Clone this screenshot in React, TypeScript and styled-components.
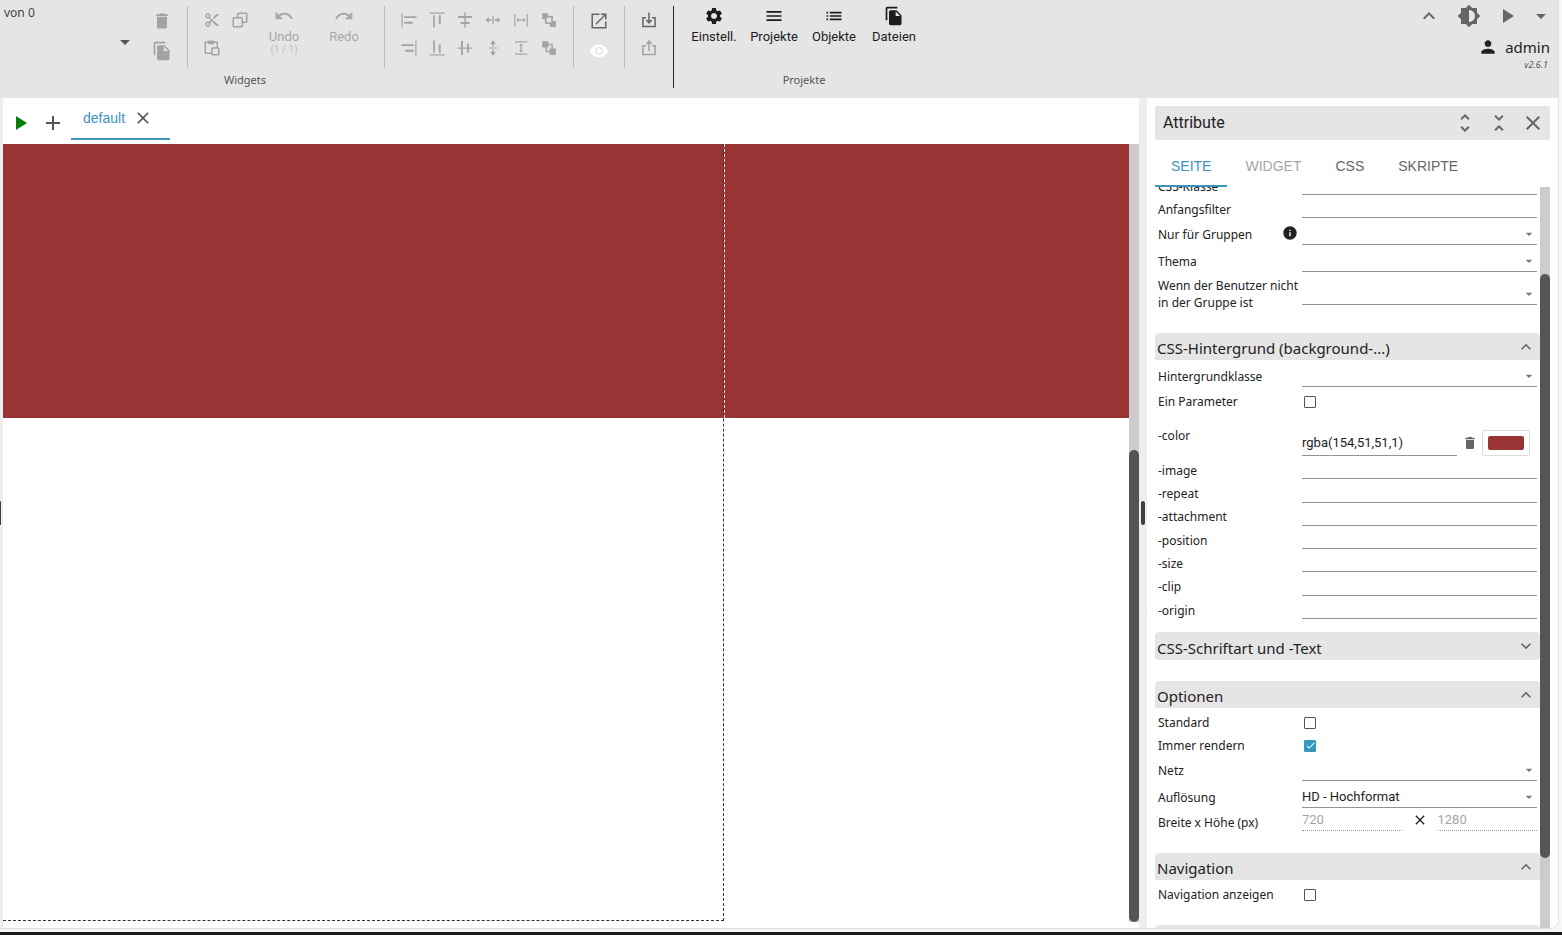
import React, { useState } from 'react';
import styled, { createGlobalStyle, css } from 'styled-components';
import {
  MdAdd,
  MdArrowDropDown,
  MdBrightness6,
  MdCheck,
  MdClose,
  MdDelete,
  MdFileCopy,
  MdInfo,
  MdKeyboardArrowDown,
  MdKeyboardArrowUp,
  MdList,
  MdMenu,
  MdPerson,
  MdPlayArrow,
  MdRedo,
  MdSettings,
  MdUndo,
  MdUnfoldLess,
  MdUnfoldMore,
  MdVisibility,
} from 'react-icons/md';
import { BiCopy, BiCut, BiPaste } from 'react-icons/bi';

const ui = '"Noto Sans", "Open Sans", sans-serif';
const roboto = 'Roboto, "Liberation Sans", sans-serif';
const arial = '"Liberation Sans", Arial, sans-serif';

const GlobalStyle = createGlobalStyle`
  *, *::before, *::after { box-sizing: border-box; }
  body { margin: 0; background: #f7f7f7; color: #222; font-family: ${ui}; }
  button, input, select { font: inherit; color: inherit; margin: 0; padding: 0; border: 0; border-radius: 0; background: none; outline: none; }
  button { cursor: pointer; }
  svg { display: block; flex: none; }
`;

const Screen = styled.div`
  display: flex;
  flex-direction: column;
  height: 100vh;
  border-bottom: 3px solid #1b1a1b;
  padding: 0 4px 4px 0;
`;

const Window = styled.div`
  flex: 1;
  min-height: 0;
  display: flex;
  flex-direction: column;
  overflow: hidden;
  background: #fff;
  box-shadow: 0 0 1px 1px #e0e0e0;
  border-bottom-right-radius: 8px;
`;

/* ---------- toolbar ---------- */

const Toolbar = styled.header`
  display: flex;
  height: 98px;
  padding-top: 6px;
  background: #e5e5e5;
`;

const Group = styled.section`
  display: flex;
  flex-direction: column;
  height: 82px;
`;

const Tools = styled.div`
  display: flex;
  height: 63px;
`;

const GroupLabel = styled.div<{ $indent?: number }>`
  margin-top: 4px;
  padding-left: ${(p) => p.$indent ?? 0}px;
  font-size: 11px;
  line-height: 16px;
  color: #555;
  text-align: ${(p) => (p.$indent ? 'left' : 'center')};
`;

const Divider = styled.div`
  width: 1px;
  margin: 0 10px;
  background: #bdbdbd;
`;

const StrongDivider = styled.div`
  width: 1px;
  height: 82px;
  margin: 0 10px;
  background: #222;
`;

const ViewPicker = styled.div`
  display: flex;
  flex-direction: column;
  width: 147px;
  padding: 0 10px 0 4px;
  font-size: 12px;
  line-height: 14px;
  color: #444;
`;

const PickerArrow = styled.button`
  align-self: flex-end;
  margin-top: 10px;
  color: #555;
`;

const IconGrid = styled.div<{ $cell: number }>`
  display: grid;
  grid-auto-flow: column;
  align-content: start;
  grid-template-rows: repeat(2, ${(p) => p.$cell}px);
  grid-auto-columns: ${(p) => p.$cell}px;
`;

const IconButton = styled.button<{ $tone?: string }>`
  display: grid;
  place-items: center;
  color: ${(p) => p.$tone ?? '#a3a3a3'};
`;

const ToolButton = styled.button<{ $muted?: boolean }>`
  display: flex;
  flex-direction: column;
  align-items: center;
  width: 60px;
  font-family: ${roboto};
  font-size: 13px;
  line-height: 22px;
  color: ${(p) => (p.$muted ? '#a8a8a8' : '#1c1c1c')};

  small {
    font-size: 10px;
    line-height: 4px;
    color: #c2c2c2;
  }
`;

const Account = styled.div`
  display: flex;
  flex-direction: column;
  align-items: flex-end;
  margin-left: auto;
  padding-right: 8px;
`;

const AccountTools = styled.div`
  display: flex;
  align-items: center;
  height: 20px;
  gap: 14px;
  margin-right: -3px;

  > :first-child { margin-right: 2px; }
  > :last-child { margin-left: -4px; }
`;

const User = styled.div`
  display: flex;
  align-items: center;
  gap: 7px;
  margin-top: 10px;
  font-size: 15px;
  line-height: 22px;
`;

const Version = styled.em`
  padding-right: 2px;
  font-size: 9px;
  line-height: 14px;
  color: #555;
`;

/* ---------- work area ---------- */

const Work = styled.div`
  flex: 1;
  min-height: 0;
  display: flex;
`;

const Splitter = styled.div<{ $size: number }>`
  display: flex;
  align-items: center;
  justify-content: ${(p) => (p.$size > 4 ? 'center' : 'flex-start')};
  width: ${(p) => p.$size}px;
  background: #eee;

  &::after {
    content: '';
    width: ${(p) => (p.$size > 4 ? 4 : 1)}px;
    height: 24px;
    border-radius: 2px;
    background: #3f3d45;
  }
`;

const Editor = styled.main`
  flex: 1;
  min-width: 0;
  display: flex;
  flex-direction: column;
  padding-bottom: 6px;
`;

const ViewTabs = styled.div`
  display: flex;
  align-items: center;
  height: 46px;
  padding-top: 4px;
  padding-left: 5px;
  gap: 9px;
`;

const ViewTab = styled.div`
  display: flex;
  align-items: center;
  align-self: flex-start;
  gap: 8px;
  height: 38px;
  margin-left: -3px;
  padding: 0 17px 4px 12px;
  border-bottom: 2px solid #3e93bd;
  font-family: ${arial};
  font-size: 14px;
  color: #3e93bd;
`;

const Stage = styled.div`
  flex: 1;
  min-height: 0;
  display: flex;
`;

const Canvas = styled.div`
  position: relative;
  flex: 1;
  min-width: 0;
  overflow: hidden;
`;

const CanvasFill = styled.div`
  height: 274px;
  background: #9a3333;
`;

const ResolutionFrame = styled.div`
  position: absolute;
  top: 0;
  bottom: 1px;
  left: 0;
  width: 721px;
  border: dashed #333;
  border-width: 0 1px 1px 0;
`;

const FrameHalo = styled.div`
  position: absolute;
  top: 0;
  left: 721px;
  height: 274px;
  border-left: 1px dashed #f4e6e6;
`;

const ScrollTrack = styled.div<{ $before: number; $after: number }>`
  display: flex;
  width: 10px;
  padding: ${(p) => p.$before}px 0 ${(p) => p.$after}px;
  background: #ccc;

  &::after {
    content: '';
    flex: 1;
    border-radius: 5px;
    background: #555;
  }
`;

/* ---------- attribute panel ---------- */

const Panel = styled.aside`
  display: flex;
  flex-direction: column;
  width: 411px;
  padding: 8px 8px 0;
`;

const PanelHeader = styled.div`
  display: flex;
  align-items: center;
  height: 34px;
  padding: 0 5px 0 8px;
  gap: 10px;
  border-radius: 2px;
  background: #e5e5e5;
  font-family: ${roboto};
  font-size: 16px;

  > span { flex: 1; padding-bottom: 2px; }
`;

const PanelTabs = styled.div`
  display: flex;
  height: 47px;
  gap: 2px;
  font-family: ${arial};
  font-size: 14px;
`;

const PanelTab = styled.button<{ $state?: 'active' | 'disabled' }>`
  padding: 7px 16px 0;
  border-bottom: 2px solid transparent;
  color: #666;
  ${(p) => p.$state === 'active' && css`border-color: #3e93bd; color: #3e93bd;`}
  ${(p) => p.$state === 'disabled' && css`color: #a5a5a5;`}
`;

const PanelBody = styled.div`
  flex: 1;
  min-height: 0;
  display: flex;
  overflow: hidden;
`;

const Sections = styled.div`
  flex: 1;
  min-width: 0;
  margin-top: -15px;
`;

const SectionHeader = styled.button<{ $open: boolean }>`
  display: flex;
  align-items: center;
  justify-content: space-between;
  width: 100%;
  height: ${(p) => (p.$open ? 27 : 28)}px;
  padding: 0 4px 0 2px;
  border-radius: ${(p) => (p.$open ? '4px 4px 0 0' : '4px')};
  background: #e5e5e5;
  font-size: 15px;
  line-height: 24px;

  > span { padding-top: 3px; }
  > svg { color: #666; }
`;

const SectionBody = styled.div<{ $gap?: number }>`
  padding: 0 3px ${(p) => p.$gap ?? 22}px;
`;

const rowHeight = { text: 23, check: 23, select: 27, double: 39, color: 46 };
type RowKind = keyof typeof rowHeight;

const RowBox = styled.div<{ $kind: RowKind }>`
  display: grid;
  grid-template-columns: 144px minmax(0, 1fr);
  align-items: center;
  height: ${(p) => rowHeight[p.$kind]}px;
`;

const StyleRows = styled.div`
  display: grid;
  grid-template-rows: repeat(7, 1fr);
  height: 163px;
  align-items: end;
`;

const RowLabel = styled.label`
  display: flex;
  align-items: center;
  justify-content: space-between;
  padding-top: 5px;
  font-size: 12px;
  line-height: 17px;
  white-space: pre;

  > svg { margin: -2px 4px 0 0; }
`;

const TextInput = styled.input<{ $dotted?: boolean }>`
  width: 100%;
  height: 23px;
  border-bottom: 1px ${(p) => (p.$dotted ? 'dotted #999' : 'solid #949494')};
  font-family: ${roboto};
  font-size: 13px;
  line-height: 20px;
  &:disabled { color: #a5a5a5; }
`;

const SelectBox = styled.div`
  display: grid;
  align-items: center;
  justify-items: end;

  > * { grid-area: 1 / 1; }
  > svg { margin-top: 4px; color: #777; pointer-events: none; }
`;

const SelectInput = styled.select`
  appearance: none;
  width: 100%;
  height: 27px;
  padding-top: 4px;
  border-bottom: 1px solid #949494;
  font-family: ${roboto};
  font-size: 13px;
`;

const CheckBox = styled.span`
  display: grid;
  place-items: center;
  width: 12px;
  height: 12px;
  margin: 6px 0 0 2px;

  > * { grid-area: 1 / 1; }
  > svg { color: #fff; pointer-events: none; }
`;

const CheckInput = styled.input`
  appearance: none;
  width: 12px;
  height: 12px;
  border: 1px solid #555;
  border-radius: 1px;
  &:checked { border-color: #3399c0; background: #3399c0; }
`;

const ColorField = styled.div`
  display: flex;
  align-items: flex-end;
  height: 46px;
  padding-right: 7px;

  > input { flex: 1; min-width: 0; height: 26px; }
  > button:first-of-type { margin: 0 4px 5px 5px; color: #666; }
`;

const Swatch = styled.button`
  width: 48px;
  height: 26px;
  padding: 5px;
  border: 1px solid #ddd;
  border-radius: 2px;

  &::after {
    content: '';
    display: block;
    height: 14px;
    border-radius: 2px;
    background: #9a3333;
  }
`;

const SizeField = styled.div`
  display: grid;
  grid-template-columns: minmax(0, 1fr) 16px minmax(0, 1fr);
  align-items: center;
  gap: 10px;
`;

/* ---------- alignment glyphs ---------- */

const Glyph = ({ children, turn }: { children: React.ReactNode; turn?: string }) => (
  <svg width="16" height="16" viewBox="0 0 16 16" fill="currentColor" aria-hidden="true">
    <g transform={turn}>{children}</g>
  </svg>
);

const alignEdge = (
  <>
    <path d="M.5 .8h1.2v14.8H.5z" />
    <path d="M3.2 4.2h12.4v1.7H3.2zM3.2 9.8h8.6v1.9H3.2z" />
  </>
);
const alignMiddle = <path d="M7.4 .4h1.4v3.6h6.200v1.900H8.800v4.100h3.800v1.900H8.800v3.700H7.400v-3.700H3.600V10h3.800V5.900H1V4h6.400z" />;
const spread = <path d="M7.4 4h1.2v8.4H7.4zM.6 8l3.200-3v2.200h2.600v1.600H3.800V11zM15.400 8l-3.200-3v2.200H9.600v1.600h2.600V11z" />;
const fitBetween = <path d="M1.2 2h1.2v12.400H1.2zM13.600 2h1.200v12.400h-1.200zM3.4 8l2.4-2.2v1.6h4.4V5.8L12.6 8l-2.4 2.2V8.6H5.8v1.6z" />;
const toFront = (
  <>
    <path d="M1.200 1.200h6v6h-6zM8.900 8.900h6v6h-6z" />
    <path d="M3.900 3.900h8v8h-8z" />
    <path d="M5.600 5.600h4.600v4.600H5.600z" fill="#e5e5e5" />
  </>
);
const toBack = (
  <>
    <path d="M4.600 3.800h7.200v8.400H4.600z" />
    <path d="M6 5.200h4.400v5.600H6z" fill="#e5e5e5" />
    <path d="M1.200 1.200h6.200v6.200H1.200zM8.600 8.600h6.200v6.200H8.600z" />
  </>
);

const alignTools: [string, React.ReactNode][] = [
  ['Links ausrichten', <Glyph>{alignEdge}</Glyph>],
  ['Rechts ausrichten', <Glyph turn="matrix(-1 0 0 1 16 0)">{alignEdge}</Glyph>],
  ['Oben ausrichten', <Glyph turn="matrix(0 1 1 0 0 0)">{alignEdge}</Glyph>],
  ['Unten ausrichten', <Glyph turn="matrix(0 -1 1 0 0 16)">{alignEdge}</Glyph>],
  ['Horizontal zentrieren', <Glyph>{alignMiddle}</Glyph>],
  ['Vertikal zentrieren', <Glyph turn="matrix(0 1 1 0 0 0)">{alignMiddle}</Glyph>],
  ['Horizontal verteilen', <Glyph>{spread}</Glyph>],
  ['Vertikal verteilen', <Glyph turn="matrix(0 1 1 0 0 0)">{spread}</Glyph>],
  ['Gleiche Breite', <Glyph>{fitBetween}</Glyph>],
  ['Gleiche Höhe', <Glyph turn="matrix(0 1 1 0 0 0)">{fitBetween}</Glyph>],
  ['Nach vorne', <Glyph>{toFront}</Glyph>],
  ['Nach hinten', <Glyph>{toBack}</Glyph>],
];

const outline = { fill: 'none', stroke: 'currentColor', strokeWidth: 1.5 };

const OpenIcon = () => (
  <svg width="16" height="16" viewBox="0 0 16 16" {...outline} aria-hidden="true">
    <path d="M8.500 1.300H1.200v13.500h13.600V8.500M10 1.300h4.800V6.500M14.600 1.500L5 11" />
  </svg>
);
const ImportIcon = () => (
  <svg width="16" height="16" viewBox="0 0 16 16" {...outline} aria-hidden="true">
    <path d="M5 5.700H1.900v8.700h12.200V5.700H11M8 .6v10M5.300 8L8 10.800 10.700 8" />
  </svg>
);
const ExportIcon = () => (
  <svg width="16" height="16" viewBox="0 0 16 16" {...outline} aria-hidden="true">
    <path d="M5 5.700H1.900v8.700h12.200V5.700H11M8 11V1.200M5.300 4L8 1.200 10.700 4" />
  </svg>
);

/* ---------- rows ---------- */

type RowProps = { id: string; label: string; kind?: RowKind; info?: boolean; children: React.ReactNode };

const Row = ({ id, label, kind = 'text', info, children }: RowProps) => (
  <RowBox $kind={kind}>
    <RowLabel htmlFor={id}>
      {label}
      {info && <MdInfo size={16} />}
    </RowLabel>
    {children}
  </RowBox>
);

const TextRow = ({ id, label }: { id: string; label: string }) => (
  <Row id={id} label={label}>
    <TextInput id={id} />
  </Row>
);

const SelectRow = ({ id, label, kind = 'select', info, value = '' }: { id: string; label: string; kind?: RowKind; info?: boolean; value?: string }) => (
  <Row id={id} label={label} kind={kind} info={info}>
    <SelectBox>
      <SelectInput id={id} defaultValue={value}>
        <option>{value}</option>
      </SelectInput>
      <MdArrowDropDown size={16} />
    </SelectBox>
  </Row>
);

const CheckRow = ({ id, label, on = false }: { id: string; label: string; on?: boolean }) => {
  const [checked, setChecked] = useState(on);
  return (
    <Row id={id} label={label} kind="check">
      <CheckBox>
        <CheckInput id={id} type="checkbox" checked={checked} onChange={(e) => setChecked(e.target.checked)} />
        {checked && <MdCheck size={11} />}
      </CheckBox>
    </Row>
  );
};

type SectionProps = { title: string; start?: boolean; gap?: number; children?: React.ReactNode };

const Section = ({ title, start = true, gap, children }: SectionProps) => {
  const [open, setOpen] = useState(start);
  return (
    <>
      <SectionHeader $open={open} onClick={() => setOpen(!open)} aria-expanded={open}>
        <span>{title}</span>
        {open ? <MdKeyboardArrowUp size={20} /> : <MdKeyboardArrowDown size={20} />}
      </SectionHeader>
      <SectionBody $gap={gap}>{open && children}</SectionBody>
    </>
  );
};

const styleProps = ['image', 'repeat', 'attachment', 'position', 'size', 'clip', 'origin'];

export default function App() {
  return (
    <>
      <GlobalStyle />
      <Screen>
        <Window>
          <Toolbar>
            <Group>
              <Tools>
                <ViewPicker>
                  von 0
                  <PickerArrow aria-label="Auswahl"><MdArrowDropDown size={24} /></PickerArrow>
                </ViewPicker>
                <IconGrid $cell={30}>
                  <IconButton aria-label="Löschen"><MdDelete size={20} /></IconButton>
                  <IconButton aria-label="Duplizieren"><MdFileCopy size={20} /></IconButton>
                </IconGrid>
                <Divider />
                <IconGrid $cell={28}>
                  <IconButton aria-label="Ausschneiden"><BiCut size={18} /></IconButton>
                  <IconButton aria-label="Einfügen"><BiPaste size={18} /></IconButton>
                  <IconButton aria-label="Kopieren"><BiCopy size={18} /></IconButton>
                </IconGrid>
                <ToolButton $muted><MdUndo size={20} />Undo<small>(1 / 1)</small></ToolButton>
                <ToolButton $muted><MdRedo size={20} />Redo</ToolButton>
                <Divider />
                <IconGrid $cell={28}>
                  {alignTools.map(([name, icon]) => (
                    <IconButton key={name} aria-label={name}>{icon}</IconButton>
                  ))}
                </IconGrid>
                <Divider />
                <IconGrid $cell={30}>
                  <IconButton aria-label="Fenster öffnen" $tone="#666"><OpenIcon /></IconButton>
                  <IconButton aria-label="Sichtbarkeit" $tone="#fff"><MdVisibility size={20} /></IconButton>
                </IconGrid>
                <Divider />
                <IconGrid $cell={28}>
                  <IconButton aria-label="Importieren" $tone="#666"><ImportIcon /></IconButton>
                  <IconButton aria-label="Exportieren"><ExportIcon /></IconButton>
                </IconGrid>
              </Tools>
              <GroupLabel $indent={224}>Widgets</GroupLabel>
            </Group>
            <StrongDivider />
            <Group>
              <Tools>
                <ToolButton><MdSettings size={20} />Einstell.</ToolButton>
                <ToolButton><MdMenu size={20} />Projekte</ToolButton>
                <ToolButton><MdList size={20} />Objekte</ToolButton>
                <ToolButton><MdFileCopy size={20} />Dateien</ToolButton>
              </Tools>
              <GroupLabel>Projekte</GroupLabel>
            </Group>
            <Account>
              <AccountTools>
                <IconButton aria-label="Einklappen" $tone="#666"><MdKeyboardArrowUp size={24} /></IconButton>
                <IconButton aria-label="Helligkeit" $tone="#666"><MdBrightness6 size={24} /></IconButton>
                <IconButton aria-label="Starten" $tone="#666"><MdPlayArrow size={24} /></IconButton>
                <IconButton aria-label="Mehr" $tone="#666"><MdArrowDropDown size={24} /></IconButton>
              </AccountTools>
              <User><MdPerson size={20} />admin</User>
              <Version>v2.6.1</Version>
            </Account>
          </Toolbar>

          <Work>
            <Splitter $size={3} />
            <Editor>
              <ViewTabs>
                <IconButton aria-label="Ansicht starten" $tone="#0a7d0a"><MdPlayArrow size={24} /></IconButton>
                <IconButton aria-label="Neue Ansicht" $tone="#555"><MdAdd size={24} /></IconButton>
                <ViewTab>
                  default
                  <IconButton aria-label="Schließen" $tone="#555"><MdClose size={20} /></IconButton>
                </ViewTab>
              </ViewTabs>
              <Stage>
                <Canvas>
                  <CanvasFill />
                  <FrameHalo />
                  <ResolutionFrame />
                </Canvas>
                <ScrollTrack $before={306} $after={0} />
              </Stage>
            </Editor>
            <Splitter $size={8} />
            <Panel>
              <PanelHeader>
                <span>Attribute</span>
                <IconButton aria-label="Alle ausklappen" $tone="#666"><MdUnfoldMore size={24} /></IconButton>
                <IconButton aria-label="Alle einklappen" $tone="#666"><MdUnfoldLess size={24} /></IconButton>
                <IconButton aria-label="Schließen" $tone="#666"><MdClose size={24} /></IconButton>
              </PanelHeader>
              <PanelTabs>
                <PanelTab $state="active">SEITE</PanelTab>
                <PanelTab $state="disabled">WIDGET</PanelTab>
                <PanelTab>CSS</PanelTab>
                <PanelTab>SKRIPTE</PanelTab>
              </PanelTabs>
              <PanelBody>
                <Sections>
                  <SectionBody>
                    <TextRow id="class" label="CSS-Klasse" />
                    <TextRow id="filter" label="Anfangsfilter" />
                    <SelectRow id="groups" label="Nur für Gruppen" info />
                    <SelectRow id="theme" label="Thema" />
                    <SelectRow id="denied" label={'Wenn der Benutzer nicht\nin der Gruppe ist'} kind="double" />
                  </SectionBody>
                  <Section title="CSS-Hintergrund (background-...)" gap={13}>
                    <SelectRow id="bgclass" label="Hintergrundklasse" />
                    <CheckRow id="single" label="Ein Parameter" />
                    <Row id="color" label="-color" kind="color">
                      <ColorField>
                        <TextInput id="color" defaultValue="rgba(154,51,51,1)" />
                        <button aria-label="Farbe löschen"><MdDelete size={16} /></button>
                        <Swatch aria-label="Farbe wählen" />
                      </ColorField>
                    </Row>
                    <StyleRows>
                      {styleProps.map((name) => (
                        <TextRow key={name} id={name} label={`-${name}`} />
                      ))}
                    </StyleRows>
                  </Section>
                  <Section title="CSS-Schriftart und -Text" start={false} gap={21} />
                  <Section title="Optionen">
                    <CheckRow id="standard" label="Standard" />
                    <CheckRow id="render" label="Immer rendern" on />
                    <SelectRow id="grid" label="Netz" />
                    <SelectRow id="resolution" label="Auflösung" value="HD - Hochformat" />
                    <Row id="width" label="Breite x Höhe (px)">
                      <SizeField>
                        <TextInput id="width" defaultValue="720" disabled $dotted />
                        <MdClose size={16} />
                        <TextInput aria-label="Höhe" defaultValue="1280" disabled $dotted />
                      </SizeField>
                    </Row>
                  </Section>
                  <Section title="Navigation">
                    <CheckRow id="nav" label="Navigation anzeigen" />
                  </Section>
                  <Section title="" />
                </Sections>
                <ScrollTrack $before={87} $after={70} />
              </PanelBody>
            </Panel>
          </Work>
        </Window>
      </Screen>
    </>
  );
}
